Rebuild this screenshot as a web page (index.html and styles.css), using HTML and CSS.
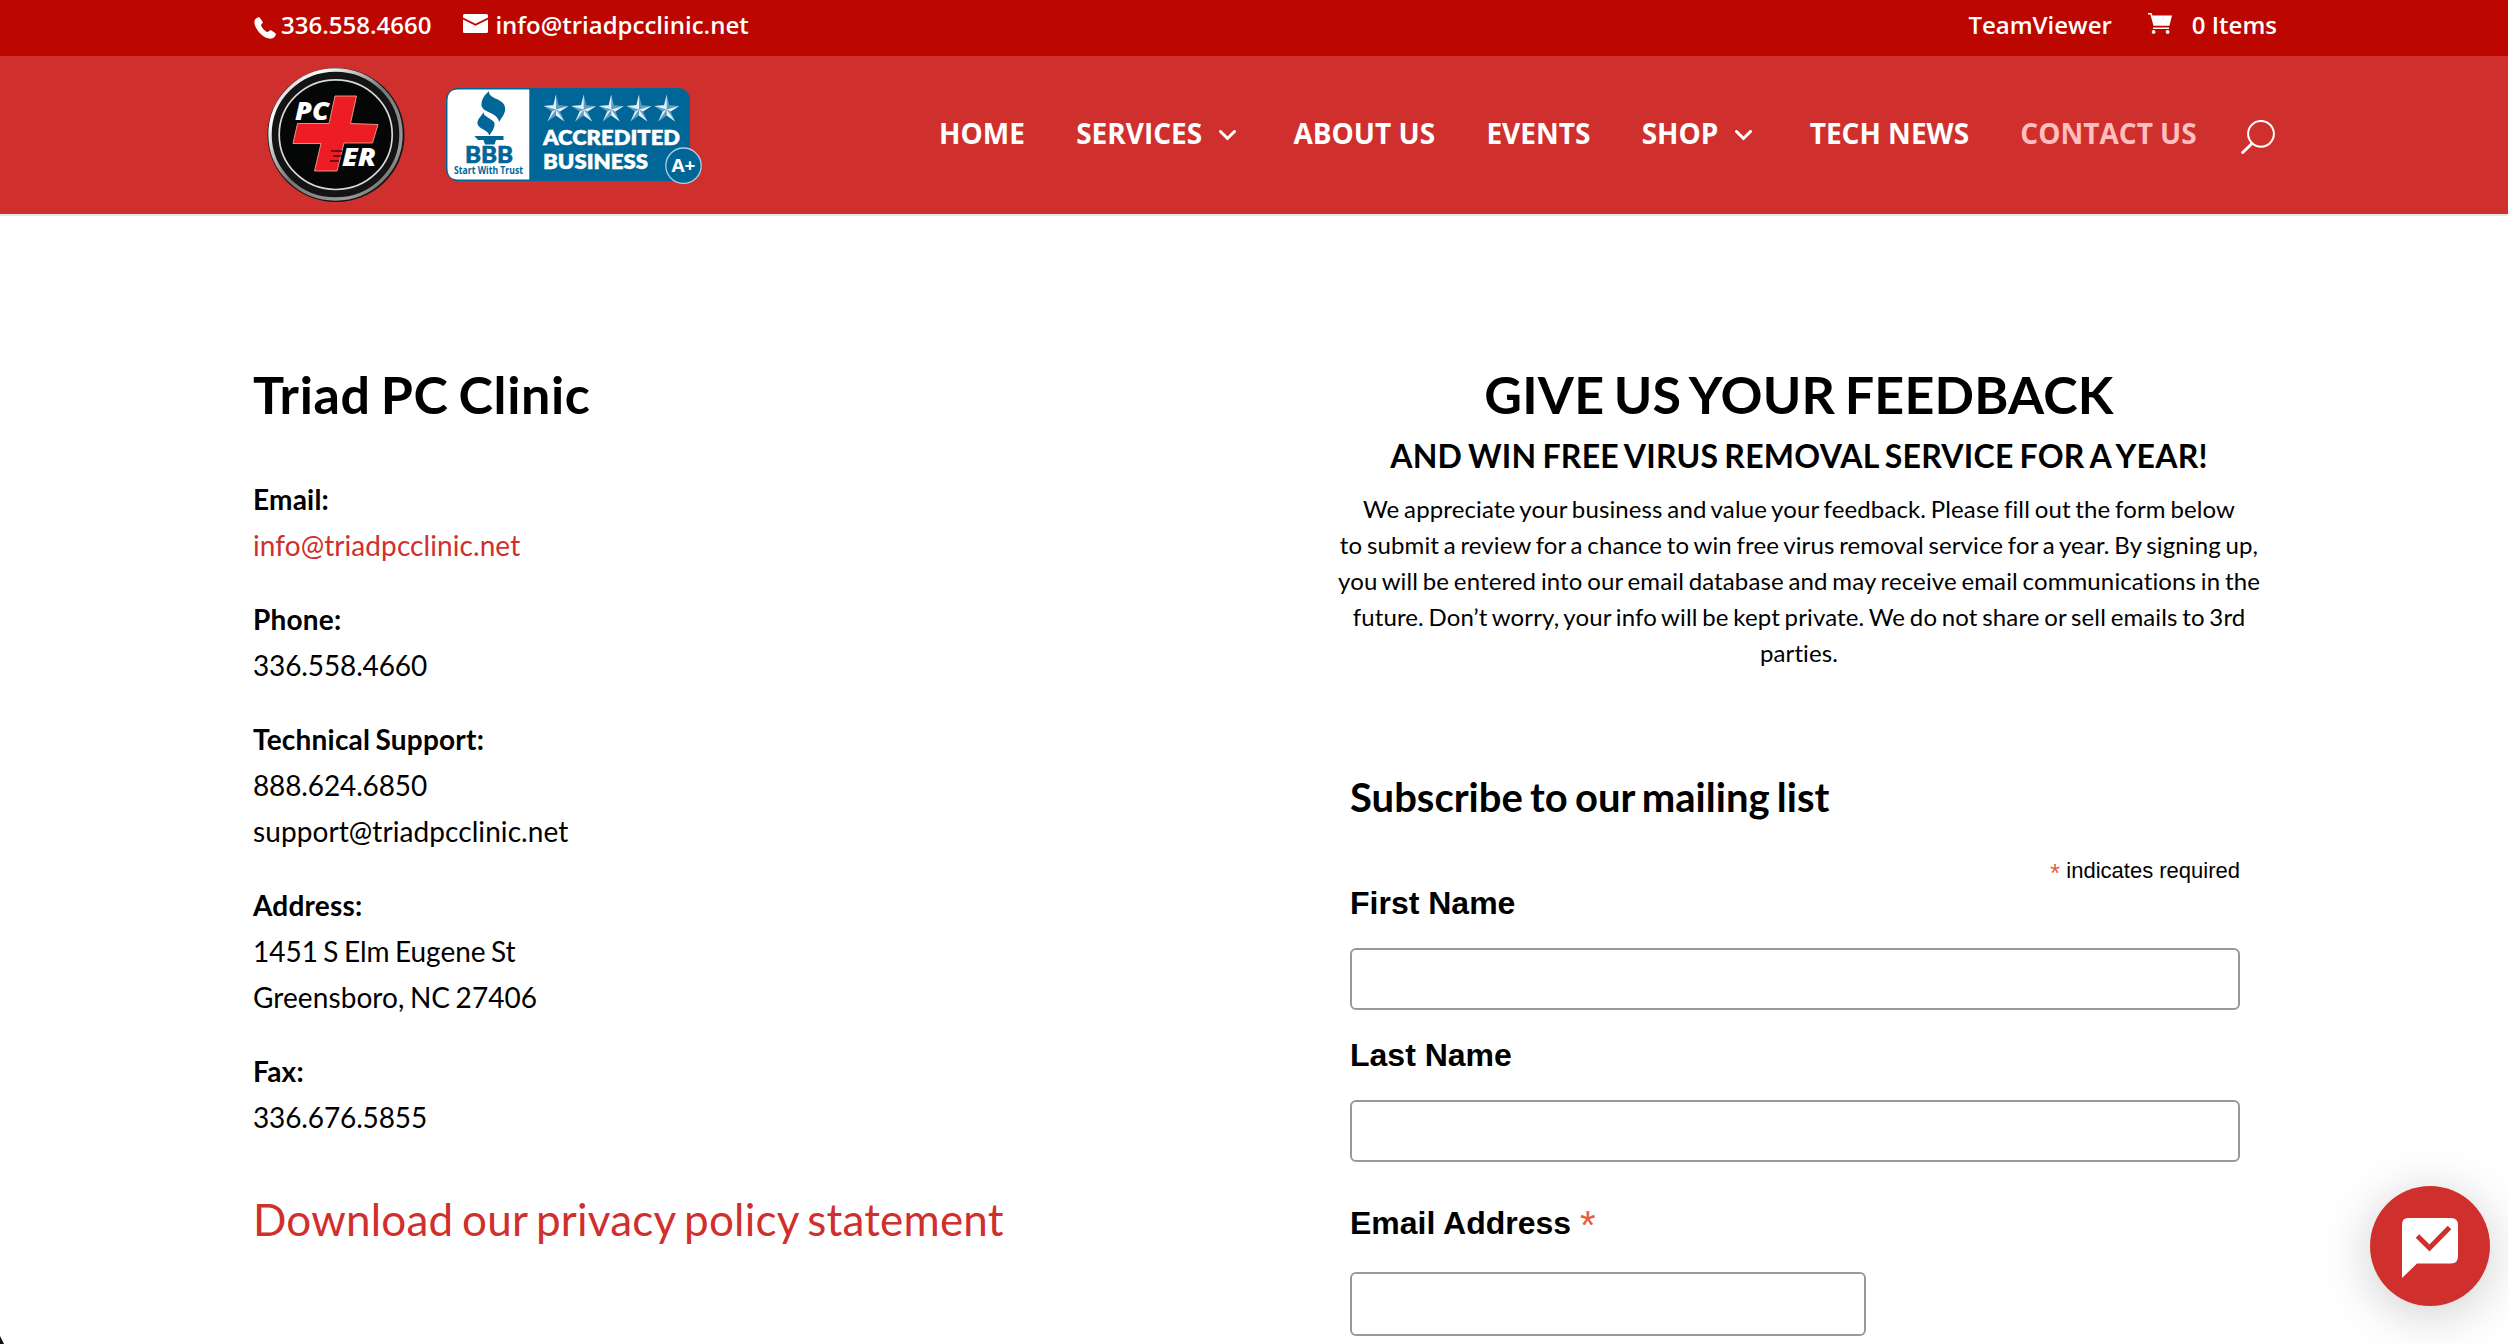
FILE: index.html
```html
<!DOCTYPE html>
<html lang="en">
<head>
<meta charset="utf-8">
<title>Contact Us | Triad PC Clinic</title>
<link rel="stylesheet" href="styles.css">
</head>
<body>
<div class="topbar">
  <div class="topbar-group">
    <a class="phone"><svg class="icon-phone" viewBox="0 0 22 22"><path d="M1 2.6C2.2.6 4.4-.3 5.600.4L8.600 4.800C9.200 5.900 7.900 6.900 7 7.900C7.900 11 11 14.200 13.800 15.100C15 14 16 12.700 17.100 13.300L21.500 16.200C22.500 17.500 21 20 18.700 21.300C15 22.700 9.500 20 5.600 15.900C1.700 11.800-.9 6.200 1 2.600Z"/></svg>336.558.4660</a>
    <a class="email"><svg class="icon-mail" viewBox="0 0 25 19"><path d="M1.500 0h22Q25 0 25 1.500v2L12.500 9.700 0 3.500v-2Q0 0 1.500 0ZM0 5.500l12.500 6.200L25 5.500v12q0 1.500-1.500 1.500h-22Q0 19 0 17.500Z"/></svg>info@triadpcclinic.net</a>
  </div>
  <div class="topbar-group">
    <a class="teamviewer">TeamViewer</a>
    <a class="cart"><svg class="icon-cart" viewBox="0 0 24 21"><path d="M0 0h3.600l.8 2.600H24L21.400 12.800H5.500L2.400 1.500H0ZM5 14.500h16v1.400H5Z"/><circle cx="5.600" cy="18.900" r="1.900"/><circle cx="19.600" cy="18.900" r="1.900"/></svg>0 Items</a>
  </div>
</div>

<header class="header">
  <div class="logos">
    <svg class="logo-pcer" viewBox="0 0 138 136">
      <defs><linearGradient id="rim" x1="0" y1="0" x2="1" y2="1"><stop offset="0" stop-color="#999"/><stop offset=".2" stop-color="#fff"/><stop offset=".5" stop-color="#777"/><stop offset=".8" stop-color="#999"/><stop offset="1" stop-color="#333"/></linearGradient></defs>
      <ellipse cx="69" cy="68" rx="68.500" ry="67" fill="#141414"/>
      <ellipse cx="68.500" cy="67.500" rx="65.500" ry="64.500" fill="none" stroke="url(#rim)" stroke-width="3.400"/>
      <ellipse cx="68.700" cy="67.700" rx="56.500" ry="54.800" fill="#050606" stroke="#d8d8d8" stroke-width="1.700"/>
      <path d="M68 29H89.500L83.500 56.500 111 57.500 105.500 76H77L70 104H47.500L54 76.500H26L30.500 56.500H62Z" fill="#ee1d25" stroke="#f3b8a0" stroke-width=".8"/>
      <path d="M64 84h11M66 89h9M63 94h9" stroke="#4a0a0c" stroke-width="1.500"/>
      <text class="pc-text" x="28" y="52.500" textLength="34" lengthAdjust="spacingAndGlyphs">PC</text>
      <text class="pc-text" x="75" y="99" textLength="34" lengthAdjust="spacingAndGlyphs">ER</text>
    </svg>
    <svg class="logo-bbb" viewBox="0 0 258 98">
      <rect x="1" y="1" width="244" height="93" rx="12" fill="#006698"/>
      <path d="M13 2.500H84.300V92.500H13Q2.500 92.500 2.500 81V14Q2.500 2.500 13 2.500Z" fill="#fff"/>
      <path d="M44 4Q36 11 36.500 18C37 26 53 25 54 35C58 29 61 25 60 20C58 11 43 12 44 4ZM38.500 25C36 30 32 32 32.500 37C34 42 43 43 44.500 48.500C47 44 50 41 49.500 36C47 31 38 30 38.500 25ZM29.500 49H58.500V53H51L49.500 57.500H40L38.500 53H33Z" fill="#006698"/>
      <text class="bbb-name" x="20" y="76.300" textLength="48" lengthAdjust="spacingAndGlyphs">BBB</text>
      <text class="bbb-trust" x="9" y="87.300" textLength="69" lengthAdjust="spacingAndGlyphs">Start With Trust</text>
      <g id="star"><path d="M111 7.500L113.600 18.200 123.500 19 115 24.500 119.500 34.500 111 28.500 102.500 34.500 107 24.500 98.500 19 108.400 18.200Z" fill="#5f9cc0"/><path d="M111 7.500V22.500L108.400 18.200ZM123.500 19L111 22.500 115 24.500ZM119.500 34.500L111 22.500V28.500ZM102.500 34.500L111 22.500 107 24.500ZM98.500 19L111 22.500 108.400 18.200Z" fill="#e3f0f7"/></g>
      <use href="#star" x="27.700"/><use href="#star" x="55.300"/><use href="#star" x="83"/><use href="#star" x="110.700"/>
      <text class="bbb-label" x="98" y="57.700" textLength="137" lengthAdjust="spacingAndGlyphs">ACCREDITED</text>
      <text class="bbb-label" x="98" y="81.800" textLength="105" lengthAdjust="spacingAndGlyphs">BUSINESS</text>
      <circle cx="238.500" cy="78.700" r="17.700" fill="#006698" stroke="#a9cfe3" stroke-width="1.300"/>
      <text class="bbb-grade" x="226.500" y="84.700" textLength="24" lengthAdjust="spacingAndGlyphs">A+</text>
    </svg>
  </div>
  <nav class="nav">
    <a>HOME</a>
    <a>SERVICES<svg class="icon-chevron" viewBox="0 0 17 11"><path d="M1.500 1.500l7 7 7-7"/></svg></a>
    <a>ABOUT US</a>
    <a>EVENTS</a>
    <a>SHOP<svg class="icon-chevron" viewBox="0 0 17 11"><path d="M1.500 1.500l7 7 7-7"/></svg></a>
    <a>TECH NEWS</a>
    <a class="current">CONTACT US</a>
    <svg class="icon-search" viewBox="0 0 34 34"><circle cx="20" cy="13.800" r="12.900"/><path d="M11 23.500L1.700 32.500" stroke-width="3" stroke-linecap="round"/></svg>
  </nav>
</header>

<main class="content">
  <section class="contact">
    <h1>Triad PC Clinic</h1>
    <p><strong>Email:</strong><br><a class="link">info@triadpcclinic.net</a></p>
    <p><strong>Phone:</strong><br><span class="num">336.558.4660</span></p>
    <p><strong>Technical Support:</strong><br><span class="num">888.624.6850</span><br>support@triadpcclinic.net</p>
    <p><strong>Address:</strong><br><span class="street">1451 S Elm Eugene St</span><br>Greensboro, NC 27406</p>
    <p><strong>Fax:</strong><br><span class="num">336.676.5855</span></p>
    <a class="link policy">Download our privacy policy statement</a>
  </section>
  <section class="feedback">
    <h1>GIVE US YOUR FEEDBACK</h1>
    <h3>AND WIN FREE VIRUS REMOVAL SERVICE FOR A YEAR!</h3>
    <p class="intro">We appreciate your business and value your feedback. Please fill out the form below<br>to submit a review for a chance to win free virus removal service for a year. By signing up,<br>you will be entered into our email database and may receive email communications in the<br>future. Don’t worry, your info will be kept private. We do not share or sell emails to 3rd<br>parties.</p>
    <form class="signup">
      <h2>Subscribe to our mailing list</h2>
      <div class="required-note"><span class="star">*</span> indicates required</div>
      <label for="fname">First Name</label>
      <input id="fname" type="text">
      <label for="lname">Last Name</label>
      <input id="lname" type="text">
      <label class="email-label" for="mail">Email Address <span class="star">*</span></label>
      <input class="email-input" id="mail" type="email">
    </form>
  </section>
</main>

<div class="chat"><svg class="icon-chat" viewBox="0 0 56 60"><path d="M6 0H49Q56 0 56 7V38Q56 45.500 49 45.500H15L0 60V7Q0 0 6 0Z" fill="#fff"/><path d="M15.500 18L27.500 30 47.500 9.500" fill="none" stroke="#d0302d" stroke-width="5"/></svg></div>
<div class="window-corner"></div>
</body>
</html>
```
FILE: styles.css
```css
* { box-sizing: border-box; }
body {
  margin: 0;
  height: 1344px;
  overflow: hidden;
  position: relative;
  background: #fff;
  color: #000;
  font-family: Lato, "Liberation Sans", sans-serif;
  font-size: 28px;
}
h1, h2, h3, p { margin: 0; font-weight: 700; }

.topbar {
  height: 56px;
  padding: 12px 231px 0 253px;
  display: flex;
  justify-content: space-between;
  background: #bb0700;
  color: #fff;
  font: 600 24px/25px "Open Sans", sans-serif;
  white-space: nowrap;
}
.topbar-group { display: flex; }
.topbar svg { fill: #fff; flex: none; }
.topbar a { display: flex; }
.icon-phone { width: 22px; height: 22px; margin: 5px 5px 0 1px; }
.email { margin-left: 32px; }
.icon-mail { width: 25px; height: 19px; margin: 2px 7px 0 0; }
.icon-cart { width: 24px; height: 21px; margin: 1px 20px 0 0; }
.cart { margin-left: 36px; }

.header {
  height: 160px;
  padding: 0 233px 0 267px;
  display: flex;
  justify-content: space-between;
  background: #d0302d;
  border-bottom: 2px solid #e5e7e7;
}
.logos { display: flex; }
.logo-pcer { width: 138px; height: 136px; margin-top: 11px; }
.logo-bbb { width: 258px; height: 98px; margin: 31px 0 0 40px; }
.pc-text { font: italic 800 24px "Open Sans", sans-serif; fill: #fff; }
.bbb-name { font: 900 22px Lato, sans-serif; fill: #006698; stroke: #006698; stroke-width: .6px; }
.bbb-trust { font: 700 10px "Open Sans", sans-serif; fill: #006698; }
.bbb-label { font: 800 21.5px Lato, sans-serif; fill: #fff; stroke: #fff; stroke-width: .4px; }
.bbb-grade { font: 700 17px "Open Sans", sans-serif; fill: #fff; }

.nav {
  display: flex;
  gap: 51.3px;
  height: 154px;
  align-items: center;
  color: #fff;
  font: 700 28px/38px "Open Sans", sans-serif;
  white-space: nowrap;
}
.nav a { display: flex; align-items: center; }
.current { color: #ffbfbf; }
.icon-chevron { width: 17px; height: 11px; margin: 5px 6px 0 17px; fill: none; stroke: #fff; stroke-width: 3; stroke-linecap: round; }
.icon-search { width: 34px; height: 34px; margin: 8px 0 0 -7px; fill: none; stroke: #fff; stroke-width: 2; }

.content {
  display: flex;
  justify-content: space-between;
  padding: 152px 232px 0 253px;
}
h1 { font-size: 52px; line-height: 52px; white-space: nowrap; word-spacing: -3.3px; }
.contact h1 { margin-bottom: 56px; letter-spacing: .65px; }
.contact p { font-weight: 400; line-height: 46px; margin-bottom: 28px; letter-spacing: .08px; word-spacing: -1.8px; }
.contact strong { letter-spacing: .22px; }
.contact .num { letter-spacing: -.13px; }
.contact .street { letter-spacing: 0; }
.link { color: #d0302d; }
.policy { display: block; margin-top: 57px; font-size: 44px; line-height: 44px; letter-spacing: .21px; word-spacing: -2.8px; }
.feedback { width: 954px; text-align: center; }
.feedback h1 { letter-spacing: .2px; }
.feedback h3 { margin-top: 20px; font-size: 32px; line-height: 32px; white-space: nowrap; letter-spacing: .25px; word-spacing: -2.05px; }
.feedback .intro { margin-top: 19px; font-weight: 400; font-size: 24px; line-height: 36px; white-space: nowrap; letter-spacing: .12px; word-spacing: -1.54px; }

.signup {
  margin-top: 106px;
  padding: 0 36px 0 28px;
  display: flex;
  flex-direction: column;
  text-align: left;
  font-family: "Liberation Sans", sans-serif;
}
.signup h2 { font: 700 40px/40px Lato, sans-serif; word-spacing: -2.5px; }
.required-note { margin: 42px 0 4px; text-align: right; font-size: 22px; line-height: 24px; }
.star { color: #e85c41; font-weight: 400; line-height: 0; }
.required-note .star { font-size: 26px; vertical-align: -4px; }
.email-label .star { font-size: 40px; vertical-align: -5px; }
.signup label { height: 32px; font-weight: 700; font-size: 32px; line-height: 32px; }
.signup input {
  width: 100%;
  height: 62px;
  margin: 29px 0;
  padding: 0 16px;
  border: 2px solid #999;
  border-radius: 6px;
  background: #fff;
}
.signup .email-label { margin-top: 16px; }
.signup .email-input { width: 516px; height: 64px; margin: 33px 0 0; }

.chat {
  position: absolute;
  left: 2370px;
  top: 1186px;
  width: 120px;
  height: 120px;
  padding: 32px;
  border-radius: 50%;
  background: #d0302d;
  box-shadow: 0 8px 52px rgba(0, 0, 0, .2);
}
.icon-chat { display: block; width: 56px; height: 60px; }
.window-corner {
  position: absolute;
  left: 0;
  bottom: 0;
  width: 4px;
  height: 8px;
  background: #111;
  clip-path: polygon(0 0, 100% 100%, 0 100%);
}
```
